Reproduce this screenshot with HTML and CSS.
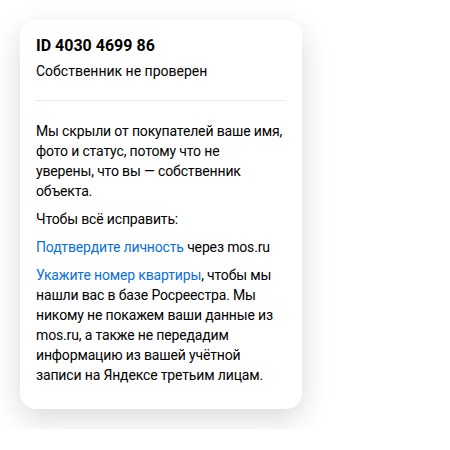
FILE: index.html
```html
<!DOCTYPE html>
<html lang="ru">
<head>
<meta charset="utf-8">
<link rel="stylesheet" href="styles.css">
</head>
<body>
<div class="card">
  <div class="title">ID 4030 4699 86</div>
  <div class="subtitle">Собственник не проверен</div>
  <div class="divider"></div>
  <p class="text">Мы скрыли от покупателей ваше имя,<br>фото и статус, потому что не<br>уверены, что вы — собственник<br>объекта.</p>
  <p class="text gap">Чтобы всё исправить:</p>
  <p class="text gap"><a class="link">Подтвердите личность</a> через mos.ru</p>
  <p class="text gap"><a class="link">Укажите номер квартиры</a>, чтобы мы<br>нашли вас в базе Росреестра. Мы<br>никому не покажем ваши данные из<br>mos.ru, а также не передадим<br>информацию из вашей учётной<br>записи на Яндексе третьим лицам.</p>
</div>
</body>
</html>
```
FILE: styles.css
```css
html, body {
  margin: 0;
  padding: 0;
  background: #fff;
}
body {
  padding: 20px;
  font-family: Roboto, "Noto Sans", sans-serif;
  color: #000;
}
.card {
  width: 282px;
  box-sizing: border-box;
  padding: 16px 16px 24px;
  background: #fff;
  border-radius: 16px;
  box-shadow: 0 10px 30px rgba(0, 0, 0, 0.15);
}
.title {
  font-size: 16px;
  font-weight: 700;
  line-height: 20px;
}
.subtitle {
  margin-top: 5px;
  font-size: 14px;
  line-height: 20px;
}
.divider {
  height: 1px;
  background: #ebebeb;
  margin: 19px 0 20px;
}
.text {
  margin: 0;
  font-size: 14px;
  line-height: 20px;
  letter-spacing: -0.15px;
  white-space: nowrap;
}
.gap {
  margin-top: 8px;
}
.link {
  color: #0a6fd9;
  text-decoration: none;
}
```
